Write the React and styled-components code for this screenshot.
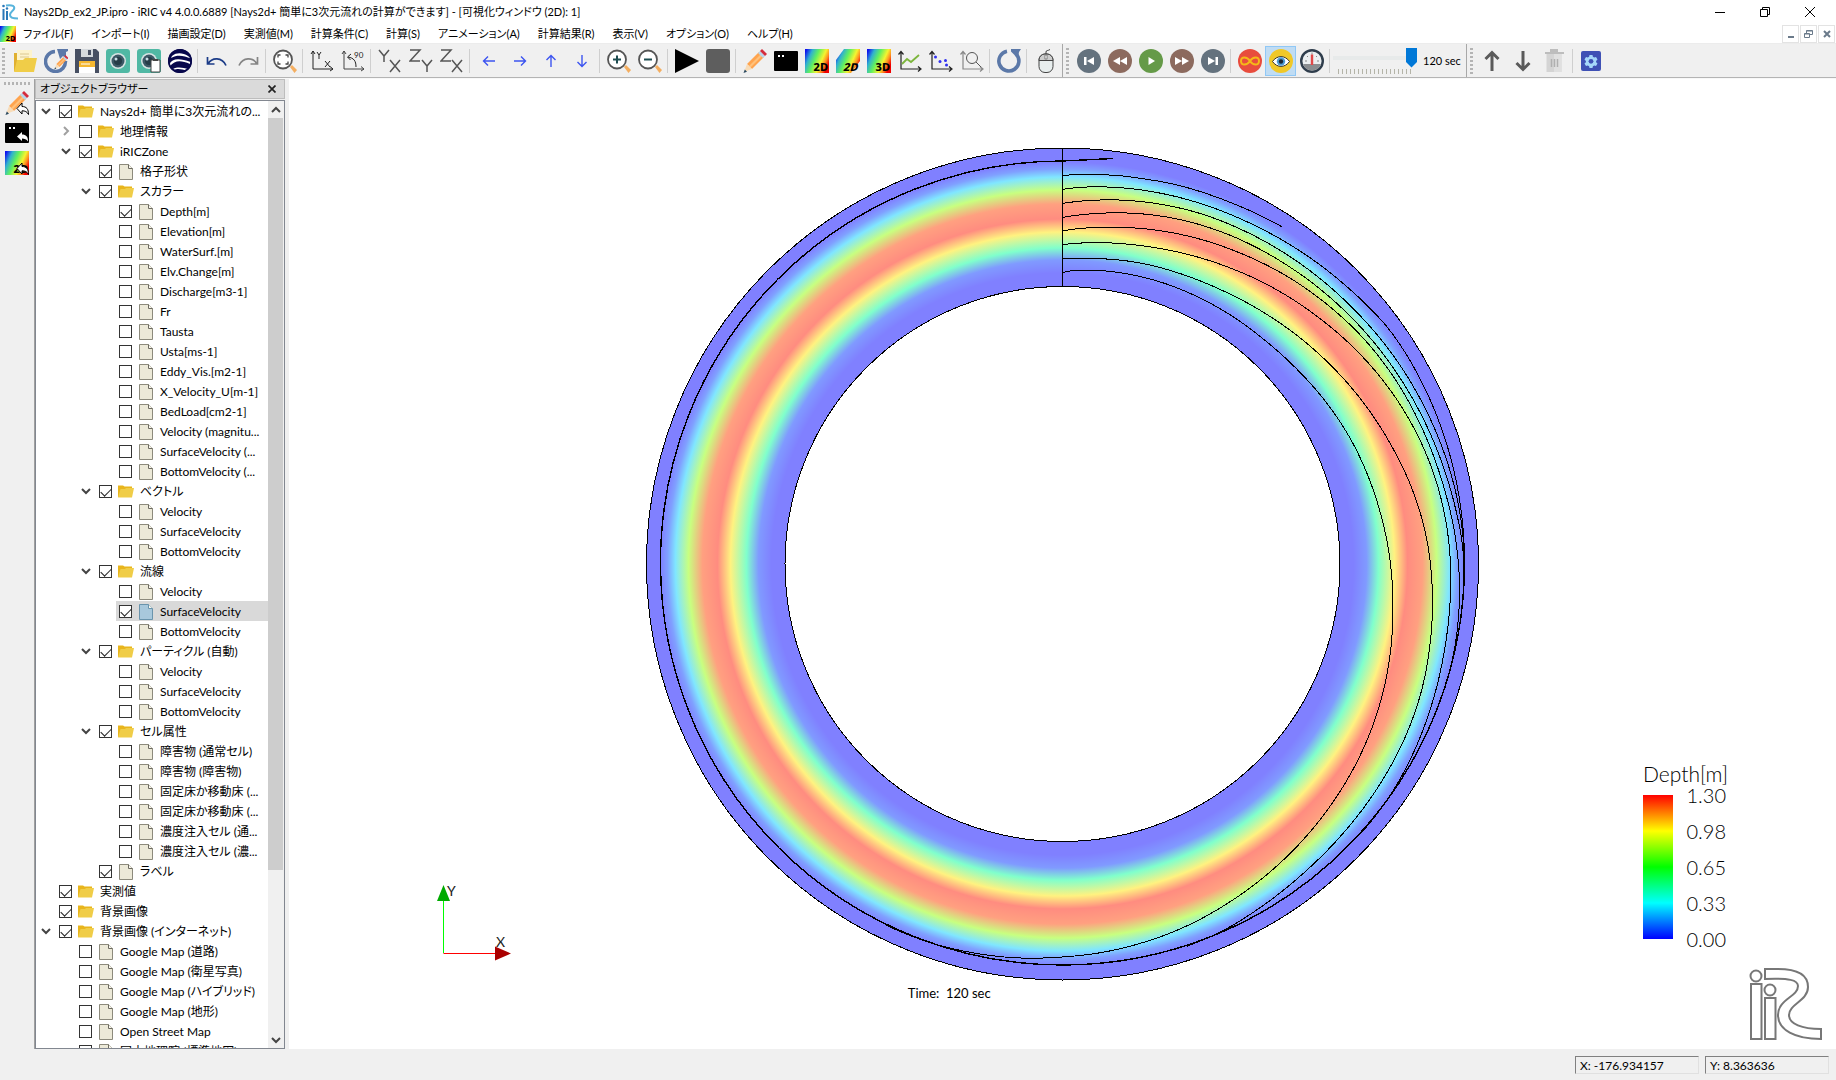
import React from "react";
import styled, { createGlobalStyle, css } from "styled-components";

const GlobalStyle = createGlobalStyle`
  * { box-sizing: border-box; }
  html, body, #root { height: 100%; }
  body {
    margin: 0;
    background: #fff;
    color: #000;
    font-family: Lato, "Noto Sans CJK JP", "Noto Sans", sans-serif;
    font-size: 12px;
    font-feature-settings: "palt";
    line-height: 20px;
  }
  button, input { font: inherit; color: inherit; }
`;

/* ---------- shell ---------- */

const Shell = styled.div`
  display: flex;
  flex-direction: column;
  height: 100vh;
  overflow: hidden;
`;

const TitleBar = styled.header`
  display: flex;
  align-items: center;
  height: 24px;
  flex: none;
  padding: 0 10px 0 2px;
`;

const TitleText = styled.h1`
  flex: 1;
  margin: 0 0 0 6px;
  font-size: 11px;
  font-weight: 400;
  white-space: nowrap;
`;

const WindowControls = styled.div`
  display: flex;
  gap: 13px;
`;

const WindowButton = styled.button`
  display: grid;
  place-items: center;
  width: 32px;
  height: 20px;
  padding: 0;
  border: 0;
  background: transparent;
`;

const MenuBar = styled.nav`
  display: flex;
  align-items: center;
  height: 20px;
  flex: none;
  border-bottom: 1px solid #ececec;
`;

const MenuList = styled.ul`
  display: flex;
  flex: 1;
  gap: 18px;
  margin: 0 0 0 7px;
  padding: 0;
  list-style: none;
`;

const MenuButton = styled.button`
  padding: 0;
  border: 0;
  background: transparent;
  font-size: 11px;
  white-space: nowrap;
  line-height: 18px;
`;

const MdiControls = styled.div`
  display: flex;
  gap: 1px;
  padding-right: 1px;
`;

const MdiButton = styled.button`
  display: grid;
  place-items: center;
  width: 17px;
  height: 18px;
  padding: 0;
  border: 1px solid #e3e3e3;
  background: #fff;
`;

const ToolRow = styled.div`
  display: flex;
  height: 34px;
  flex: none;
  background: #f0f0f0;
  border-bottom: 1px solid #b4b4b4;
`;

const ToolBar = styled.div`
  display: flex;
  align-items: center;
  padding: 0 1px 0 ${(p) => (p.$first ? 1 : 2)}px;
  border-right: ${(p) => (p.$last ? "0" : "1px solid #a8a8a8")};
`;

const Grip = styled.span`
  flex: none;
  ${(p) =>
    p.$horizontal
      ? css`
          width: 26px;
          height: 3px;
          margin: 3px 4px;
          background: repeating-linear-gradient(90deg, #b4b4b4 0 2px, transparent 2px 4px);
        `
      : css`
          width: 3px;
          height: 26px;
          margin: 0 4px 0 1px;
          background: repeating-linear-gradient(180deg, #b4b4b4 0 2px, transparent 2px 4px);
        `}
`;

const ToolButton = styled.button`
  display: grid;
  place-items: center;
  width: 31px;
  height: 30px;
  flex: none;
  padding: 0;
  border: 1px solid ${(p) => (p.$on ? "#90c8f6" : "transparent")};
  background: ${(p) => (p.$on ? "#c0dcf3" : "transparent")};

  svg { display: block; }
`;

const Separator = styled.span`
  width: 6px;
  height: 24px;
  flex: none;
  background: linear-gradient(#cfcfcf, #cfcfcf) 2px 0 / 1px 100% no-repeat;
`;

const SliderBox = styled.div`
  display: flex;
  flex-direction: column;
  justify-content: center;
  gap: 1px;
  width: 84px;
`;

const Slider = styled.input`
  appearance: none;
  width: 100%;
  height: 20px;
  margin: 0;
  background: linear-gradient(#e7eaea, #e7eaea) 0 8px / 100% 4px no-repeat;

  &::-webkit-slider-thumb {
    appearance: none;
    width: 11px;
    height: 20px;
    background: #0078d7;
    clip-path: polygon(0 0, 100% 0, 100% 72%, 50% 100%, 0 72%);
  }
`;

const Ticks = styled.span`
  height: 5px;
  margin: 0 5px;
  background: repeating-linear-gradient(90deg, #b4b4a8 0 1px, transparent 1px 4px);
`;

const SliderLabel = styled.label`
  margin: 0 4px 0 6px;
  font-size: 11px;
  white-space: nowrap;
`;

const Workspace = styled.div`
  display: flex;
  flex: 1;
  min-height: 0;
  border-top: 1px solid #f8f8f8;
`;

const SideTools = styled.div`
  display: flex;
  flex-direction: column;
  align-items: center;
  width: 35px;
  flex: none;
  background: #f0f0f0;
  border-right: 1px solid #a0a0a0;
`;

const Dock = styled.aside`
  display: flex;
  flex-direction: column;
  gap: 1px;
  width: 254px;
  flex: none;
  padding-right: 4px;
  background: #f0f0f0;
`;

const DockTitle = styled.div`
  display: flex;
  align-items: center;
  justify-content: space-between;
  height: 20px;
  flex: none;
  padding: 0 6px 0 4px;
  background: #dadada;
  border: 1px solid #bdbdbd;
`;

const DockHeading = styled.h2`
  margin: 0;
  font-size: 11px;
  font-weight: 400;
`;

const DockClose = styled.button`
  display: grid;
  place-items: center;
  width: 12px;
  height: 12px;
  padding: 0;
  border: 0;
  background: transparent;
`;

const TreeFrame = styled.div`
  display: flex;
  flex: 1;
  min-height: 0;
  background: #fff;
  border: 1px solid #828790;
`;

const TreeList = styled.ul`
  flex: 1;
  min-width: 0;
  margin: 0;
  padding: 0;
  overflow: hidden;
  list-style: none;
`;

const TreeRow = styled.li`
  display: flex;
  height: 20px;
  padding-left: ${(p) => p.$depth * 20}px;
`;

const Expander = styled.button`
  display: grid;
  place-items: center;
  width: 20px;
  height: 20px;
  flex: none;
  padding: 0;
  border: 0;
  background: transparent;
`;

const ExpanderGap = styled.span`
  width: 20px;
  flex: none;
`;

const TreeLabel = styled.label`
  display: flex;
  align-items: center;
  flex: 1;
  min-width: 0;
  padding: 1px 0 0 3px;
  white-space: nowrap;
  background: ${(p) => (p.$selected ? "#d9d9d9" : "transparent")};

  svg { flex: none; margin: 0 6px; }
`;

const Check = styled.input`
  appearance: none;
  display: grid;
  place-items: center;
  width: 13px;
  height: 13px;
  flex: none;
  margin: 0;
  border: 1px solid #333;
  background: #fff;

  &:checked::after {
    content: "";
    width: 5px;
    height: 9px;
    margin-bottom: 3px;
    border: solid #222;
    border-width: 0 1px 1px 0;
    transform: rotate(45deg);
  }
`;

const ScrollBar = styled.div`
  display: flex;
  flex-direction: column;
  align-items: center;
  width: 16px;
  flex: none;
  background: #f0f0f0;
`;

const ScrollButton = styled.button`
  display: grid;
  place-items: center;
  width: 100%;
  height: 17px;
  flex: none;
  padding: 0;
  border: 0;
  background: transparent;
`;

const ScrollTrack = styled.div`
  flex: 1;
  width: 100%;
`;

const ScrollThumb = styled.div`
  height: 82.4%;
  margin-right: 1px;
  background: #cdcdcd;
`;

/* ---------- plot ---------- */

const Canvas = styled.main`
  position: relative;
  flex: 1;
  min-width: 0;
  background: #fff;
`;

const Plot = styled.svg`
  display: block;
  width: 100%;
  height: 100%;
`;

const Axes = styled.svg`
  position: absolute;
  left: 146px;
  bottom: 85px;
  overflow: visible;
`;

const TimeLabel = styled.p`
  position: absolute;
  left: 40%;
  bottom: 46px;
  margin: 0;
  font-size: 13px;
  white-space: pre;
`;

const Legend = styled.figure`
  position: absolute;
  right: 107px;
  bottom: 100px;
  width: 86px;
  margin: 0;
  font-size: 20px;
  font-weight: 300;
`;

const LegendTitle = styled.figcaption`
  margin-bottom: 1px;
  font-size: 21px;
  line-height: 20px;
  white-space: nowrap;
`;

const LegendBody = styled.div`
  display: flex;
  align-items: center;
  justify-content: space-between;
  padding-right: 3px;
`;

const ColorBar = styled.div`
  width: 30px;
  height: 144px;
  background: linear-gradient(#f00, #ff0 25%, #0f0 50%, #0ff 75%, #00f);
`;

const LegendValues = styled.ol`
  display: flex;
  flex-direction: column;
  gap: 16px;
  margin: 0;
  padding: 0;
  line-height: 20px;
  list-style: none;
  text-align: right;
`;

const Logo = styled.svg`
  position: absolute;
  right: 13px;
  bottom: 8px;
`;

const StatusBar = styled.footer`
  display: flex;
  align-items: center;
  justify-content: flex-end;
  gap: 6px;
  height: 31px;
  flex: none;
  padding-right: 7px;
  background: #f0f0f0;
`;

const StatusCell = styled.output`
  width: 124px;
  height: 18px;
  padding-left: 4px;
  border: 1px solid;
  border-color: #808080 #e0e0e0 #e0e0e0 #808080;
  line-height: 18px;
`;

/* ---------- icons ---------- */

function Icon({ children, size = 24 }) {
  return (
    <svg width={size} height={size} viewBox="0 0 24 24" fill="none" aria-hidden="true">
      {children}
    </svg>
  );
}

const HiddenDefs = styled.svg`
  position: absolute;
`;

const Rainbow = () => (
  <HiddenDefs width="0" height="0" aria-hidden="true">
    <defs>
      <linearGradient id="rainbow" x1="0" y1=".15" x2="1" y2=".6">
        <stop offset="0" stopColor="#1010f0" />
        <stop offset=".22" stopColor="#30b0d0" />
        <stop offset=".45" stopColor="#60f060" />
        <stop offset=".7" stopColor="#f4f430" />
        <stop offset=".85" stopColor="#ff9020" />
        <stop offset="1" stopColor="#f00000" />
      </linearGradient>
    </defs>
  </HiddenDefs>
);

const Pencil = () => (
  <>
    <path d="M4 15 16 3l5 5L9 20z" fill="#ffa44f" />
    <path d="m6 17 12-12 1.5 1.5-12 12z" fill="#ffc27c" />
    <path d="m15 4 2-2 5 5-2 2z" fill="#b8d4ea" />
    <path d="m17 2 2-2 5 5-2 2z" fill="#d42c3c" />
    <path d="M4 15 1 23l8-3z" fill="#f8dcb8" />
    <path d="m1.8 20.500-1.300 3.500 3.500-1.300z" fill="#2a4a60" />
  </>
);

const BackArrow = () => (
  <path d="M12 17.500 17 12v3.500c4.500 0 6.500 2.500 6.500 8-1.500-3-3.500-3.700-6.500-3.700V23z" fill="#fff" stroke="#000" />
);

const Terminal = () => (
  <>
    <rect y="2" width="24" height="20" rx="1" fill="#000" />
    <path d="M4 6h2v2H4zM8 6h2v2H8z" fill="#fff" />
  </>
);

const BadgeText = ({ children, x = 23 }) => (
  <text x={x} y="22" textAnchor="end" fontFamily="Noto Sans, sans-serif" fontWeight="800" fontSize="11" fill="#000">
    {children}
  </text>
);

const Disc = ({ color, children }) => (
  <>
    <circle cx="12" cy="12" r="12" fill={color} />
    {children}
  </>
);

const ChartAxes = ({ color = "#222" }) => (
  <path d="M3 3v17h19M.5 5.500 3 2.500l2.500 3M20 17.500l3 2.500-3 2.500" stroke={color} strokeWidth="1.200" />
);

const Lens = ({ children }) => (
  <>
    <path d="m17 18 2-2 5 5-2.500 3z" fill="#f4ae60" />
    <circle cx="10" cy="10.500" r="9" fill="#fff" stroke="#555" strokeWidth="1.800" />
    {children}
  </>
);

const Camera = () => (
  <>
    <rect width="24" height="24" rx="3" fill="#50b8a4" />
    <circle cx="12" cy="12" r="8" fill="#d8e4e4" />
    <circle cx="12" cy="12" r="6.500" fill="#3c5866" />
    <circle cx="12" cy="12" r="4" fill="#263c48" />
    <circle cx="10" cy="10" r="1.500" fill="#c8dce4" />
  </>
);

const glyphs = {
  open: (
    <>
      <path d="M1 4h7l2 2v16H1z" fill="#e0b030" />
      <path d="M4 1h15v14H4z" fill="#fdf3cc" />
      <path d="M7 5h9M7 8h9" stroke="#dcc890" />
      <path d="M4 11h6l2-2h12l-3 14H1z" fill="#f0cd48" />
    </>
  ),
  reopen: (
    <>
      <path d="M11 2.500A10 10 0 1 0 21.500 12" stroke="#5b78a8" strokeWidth="3.500" />
      <path d="M13 0h11v2l-2 1v7l-3-3-3 3z" fill="#5b78a8" />
      <g transform="translate(10 6) scale(.6)"><Pencil /></g>
    </>
  ),
  save: (
    <>
      <path d="M0 0h21l3 3v21H0z" fill="#474f62" />
      <path d="M6 0h12v8H6z" fill="#d5d9dd" /><path d="M13 1h3v5h-3z" fill="#474f62" />
      <path d="M4 12h16v12H4z" fill="#fff" /><path d="M4 12h16v6H4z" fill="#f5b730" />
      <path d="M6 15h9" stroke="#fff" />
    </>
  ),
  camera: <Camera />,
  cameraCopy: (
    <>
      <Camera />
      <path d="M14 11h9v12h-9z" fill="#fff" stroke="#444" /><path d="M16 10h5v2h-5z" fill="#444" />
    </>
  ),
  earth: (
    <>
      <circle cx="12" cy="12" r="12" fill="#08084c" />
      <path d="M4 7c5-4 11-3 16 0l3 2.500C16 7 10 5 3 9zM1.500 15C4 9 12 9 22.500 13l-.5 2C13 11 7 11 2 17zM5 20c5-3 11-1 15 0l-1.500 1.500C14 20 9 19 6 21z" fill="#fff" />
      <circle cx="12" cy="12" r="11.200" stroke="#08084c" strokeWidth="1.600" />
    </>
  ),
  undo: <path d="M2.500 8v7h7M3 15c4-7 14-7 18 1.500" stroke="#1c3c88" strokeWidth="1.700" />,
  redo: <path d="M21.500 8v7h-7M21 15C17 8 7 8 3 16.500" stroke="#858585" strokeWidth="1.700" />,
  fit: (
    <Lens>
      <path d="M5 8.500V6h2.500M12.500 6H15v2.500M15 12.500V15h-2.500M7.500 15H5v-2.500" stroke="#444" strokeWidth="1.300" />
    </Lens>
  ),
  axisXY: (
    <>
      <path d="M3 2v18h20M1 5l2-3 2 3M20 17.500l3 2.500-3 2" stroke="#222" />
      <path d="m7 3 2 3 2-3M9 6v4M15 12l5 6M20 12l-5 6" stroke="#222" />
    </>
  ),
  rotate90: (
    <>
      <path d="M3 2v18h20M1 5l2-3 2 3M20 17.500l3 2.500-3 2" stroke="#444" />
      <path d="M15 18c0-6-2-9-8-10M10 5 6.500 8l3 3" stroke="#222" />
      <text x="13" y="9" fontSize="8" fill="#222">90</text>
    </>
  ),
  yx: <path d="m1 1 5 6 5-6M6 7v6M12 11l10 12M22 11 12 23" stroke="#555" strokeWidth="1.500" />,
  zy: <path d="M1 1h10L1 12h10M13 11l5 6 5-6M18 17v6" stroke="#555" strokeWidth="1.500" />,
  zx: <path d="M1 1h10L1 12h10M12 11l10 12M22 11 12 23" stroke="#555" strokeWidth="1.500" />,
  left: <path d="M18 12H6.500M11 7.500 6.500 12l4.500 4.500" stroke="#3c54f0" strokeWidth="1.400" />,
  right: <path d="M6 12h11.500M13 7.500l4.500 4.500-4.500 4.500" stroke="#3c54f0" strokeWidth="1.400" />,
  up: <path d="M12 18V6.500M7.500 11 12 6.500l4.500 4.500" stroke="#3c54f0" strokeWidth="1.400" />,
  down: <path d="M12 6v11.500M7.500 13l4.500 4.500 4.500-4.500" stroke="#3c54f0" strokeWidth="1.400" />,
  zoomIn: <Lens><path d="M6 10.500h8M10 6.500v8" stroke="#1d4c50" strokeWidth="2" /></Lens>,
  zoomOut: <Lens><path d="M6 10.500h8" stroke="#1d4c50" strokeWidth="2" /></Lens>,
  run: <path d="M0 0v24l24-12z" fill="#000" />,
  stop: <rect width="24" height="24" rx="3" fill="#5e5e5e" />,
  pencil: <Pencil />,
  terminal: <Terminal />,
  win2d: <><rect width="24" height="24" fill="url(#rainbow)" /><BadgeText>2D</BadgeText></>,
  bird2d: (
    <>
      <path d="M8 0h16v12L15 24H0V11z" fill="url(#rainbow)" />
      <g transform="skewX(-14)"><BadgeText x={27}>2D</BadgeText></g>
    </>
  ),
  win3d: <><rect width="24" height="24" fill="url(#rainbow)" /><BadgeText>3D</BadgeText></>,
  chart: <><ChartAxes /><path d="m4 15 5-5 4 3 8-7" stroke="#7cb53c" strokeWidth="1.800" /></>,
  scatter: (
    <>
      <ChartAxes />
      <g fill="#3030f0"><circle cx="6.500" cy="8" r="1.500" /><circle cx="11" cy="12.500" r="1.500" /><circle cx="16.500" cy="11.500" r="1.500" /><circle cx="17.500" cy="16" r="1.500" /></g>
    </>
  ),
  verify: <><ChartAxes color="#888" /><circle cx="12" cy="9" r="5.500" stroke="#555" /><path d="m16 13 5 5" stroke="#555" /></>,
  reload: (
    <>
      <path d="M10 2.200A10 10 0 1 0 19 5" stroke="#5b78a8" strokeWidth="3.600" />
      <path d="M14 0h10l-2 3-1 6.500-7-7z" fill="#5b78a8" />
    </>
  ),
  mouse: (
    <>
      <rect x="5" y="5" width="14" height="18.500" rx="6" fill="#e8eeee" stroke="#444" />
      <path d="M5 11.500h14V11a6 6 0 0 0-6-6h-2a6 6 0 0 0-6 6z" fill="#ccc" stroke="#444" />
      <path d="M12 5V3c0-2 2-1 4-2.500" stroke="#444" /><rect x="11" y="6" width="2" height="4" fill="#fff" stroke="#444" strokeWidth=".6" />
    </>
  ),
  first: <Disc color="#64727e"><path d="M7 8h2.500v8H7zM17 8v8l-7-4z" fill="#fff" /></Disc>,
  rewind: <Disc color="#8c6a5e"><path d="M12 8v8l-7-4zM19 8v8l-7-4z" fill="#fff" /></Disc>,
  play: <Disc color="#659a48"><path d="M9.500 8v8l6.500-4z" fill="#fff" /></Disc>,
  forward: <Disc color="#8c6a5e"><path d="M5 8v8l7-4zM12 8v8l7-4z" fill="#fff" /></Disc>,
  last: <Disc color="#64727e"><path d="M14.500 8H17v8h-2.500zM7 8v8l7-4z" fill="#fff" /></Disc>,
  infinite: (
    <Disc color="#e84c3d">
      <path d="M12 12C9 7.500 3 7 3 12s6 4.500 9 0 9-5 9 0-6 4.500-9 0z" stroke="#f5b818" strokeWidth="2" />
    </Disc>
  ),
  eye: (
    <Disc color="#f0c828">
      <path d="M3.500 12.500C8 6 16 6 20.500 12.500 16 19 8 19 3.500 12.500z" fill="#fff" stroke="#333" />
      <circle cx="12" cy="12.500" r="4.200" fill="#4c9cd4" /><circle cx="12" cy="12.500" r="2.200" fill="#1c2834" />
    </Disc>
  ),
  gauge: (
    <>
      <circle cx="12" cy="12" r="10.800" fill="#ebeef0" stroke="#2f3d4c" strokeWidth="2.400" />
      <path d="M3 15h18a9.500 9.500 0 0 1-18 0z" fill="#8a8d90" />
      <path d="M12 3.500v2M5 12h2M17 12h2M7 7l1 1M17 7l-1 1" stroke="#888" />
      <path d="M12 5.500V16" stroke="#e04848" strokeWidth="2.400" />
    </>
  ),
  moveUp: <path d="M12 22V4M5.500 10 12 3.500l6.500 6.500" stroke="#5a5a5a" strokeWidth="3" />,
  moveDown: <path d="M12 2v18M5.500 14l6.500 6.500 6.500-6.500" stroke="#5a5a5a" strokeWidth="3" />,
  trash: (
    <>
      <path d="M8 0h8v3H8zM3 3h19v2H3z" fill="#bdbdbd" /><path d="M4.500 5h15v18h-15z" fill="#d4d4d4" />
      <path d="M12 5h7.500v18H12z" fill="#e0e0e0" /><path d="M9.500 10v8M12.500 10v8M15.500 10v8" stroke="#b0b0b0" strokeWidth="1.500" />
    </>
  ),
  settings: (
    <>
      <rect x="2" y="2" width="20" height="20" rx="2" fill="#3f51b5" />
      <path d="M10.500 6h3l.4 1.800 1.300.8 1.800-.6 1.500 2.600-1.400 1.300v1.300l1.400 1.300-1.500 2.500-1.800-.5-1.300.8-.4 1.700h-3l-.4-1.700-1.300-.8-1.800.5-1.500-2.500 1.400-1.300v-1.300L5.500 10.600 7 8l1.800.6 1.300-.8z" fill="#a6d8fa" />
      <circle cx="12" cy="12.300" r="2.400" fill="#3f51b5" />
    </>
  ),
  sidePencil: <><Pencil /><BackArrow /></>,
  sideTerminal: (
    <>
      <Terminal />
      <path d="M12 15.500 17 11v2.500c4 0 6 2 6 7-1.500-2.300-3.500-3-6-3V20z" fill="#fff" />
    </>
  ),
  side2d: <><rect width="24" height="24" fill="url(#rainbow)" /><BadgeText>2D</BadgeText><BackArrow /></>,
};

const AppMark = () => (
  <svg width="16" height="16" viewBox="0 0 16 16" fill="none" aria-hidden="true">
    <path d="M1.500 5v11M5 7v9" stroke="#2a78b8" strokeWidth="2" />
    <circle cx="1.500" cy="2" r="1.300" fill="#2a78b8" /><circle cx="5" cy="4.500" r="1.200" fill="#2a78b8" />
    <path d="M4 1.500c7-1 9 1 8 3.500-1 2-4 3-4 6 0 2.500 3 3.500 8 3.500" stroke="#58b4dc" strokeWidth="2" />
  </svg>
);

const FolderIcon = () => (
  <svg width="16" height="14" viewBox="0 0 16 14" aria-hidden="true">
    <path d="M0 .5h5l1.500 1H14V12H0z" fill="#e8b51c" />
    <path d="M2.500 4H7l1-1h8l-2 9.500H0z" fill="#f0cd48" />
  </svg>
);

const FileIcon = ({ selected }) => (
  <svg width="16" height="16" viewBox="0 0 16 16" aria-hidden="true">
    <path d="M1.500.5h9l4 4v11h-13z" fill={selected ? "#a8c8dc" : "#ece9d8"} stroke={selected ? "#6a94ac" : "#8c8a7c"} />
    <path d="M10.500.500v4h4" fill="#f8f6ec" stroke={selected ? "#6a94ac" : "#6c6a60"} />
  </svg>
);

const Chevron = ({ dir, color = "#444", width = 2 }) => {
  const d = { down: "M1 3l4 4 4-4", right: "M3 1l4 4-4 4", up: "M1 7l4-4 4 4" }[dir];
  return (
    <svg width="10" height="10" viewBox="0 0 10 10" fill="none" aria-hidden="true">
      <path d={d} stroke={color} strokeWidth={width} />
    </svg>
  );
};

/* ---------- data ---------- */

const MENUS = [
  "ファイル(F)", "インポート(I)", "描画設定(D)", "実測値(M)", "計算条件(C)", "計算(S)",
  "アニメーション(A)", "計算結果(R)", "表示(V)", "オプション(O)", "ヘルプ(H)",
];

const MAIN_TOOLS = [
  ["open", "reopen", "save", "camera", "cameraCopy", "earth"],
  ["undo", "redo"],
  ["fit"],
  ["axisXY", "rotate90"],
  ["yx", "zy", "zx"],
  ["left", "right", "up", "down"],
  ["zoomIn", "zoomOut"],
  ["run", "stop"],
  ["pencil", "terminal", "win2d", "bird2d", "win3d", "chart", "scatter", "verify"],
  ["reload"],
  ["mouse"],
];

const PLAY_TOOLS = [["first", "rewind", "play", "forward", "last"], ["infinite", "eye", "gauge"]];
const ORDER_TOOLS = [["moveUp", "moveDown", "trash"], ["settings"]];
const SIDE_TOOLS = ["sidePencil", "sideTerminal", "side2d"];

const folder = (depth, text, checked = true, open = "down") => ({ depth, text, checked, open, folder: true });
const file = (depth, text, checked = false, selected = false) => ({ depth, text, checked, selected });

const TREE = [
  folder(0, "Nays2d+ 簡単に3次元流れの..."),
  folder(1, "地理情報", false, "right"),
  folder(1, "iRICZone"),
  file(2, "格子形状", true),
  folder(2, "スカラー"),
  file(3, "Depth[m]", true),
  ...[
    "Elevation[m]", "WaterSurf.[m]", "Elv.Change[m]", "Discharge[m3-1]", "Fr", "Tausta", "Usta[ms-1]",
    "Eddy_Vis.[m2-1]", "X_Velocity_U[m-1]", "BedLoad[cm2-1]", "Velocity (magnitu...",
    "SurfaceVelocity (...", "BottomVelocity (...",
  ].map((t) => file(3, t)),
  folder(2, "ベクトル"),
  file(3, "Velocity"),
  file(3, "SurfaceVelocity"),
  file(3, "BottomVelocity"),
  folder(2, "流線"),
  file(3, "Velocity"),
  file(3, "SurfaceVelocity", true, true),
  file(3, "BottomVelocity"),
  folder(2, "パーティクル (自動)"),
  file(3, "Velocity"),
  file(3, "SurfaceVelocity"),
  file(3, "BottomVelocity"),
  folder(2, "セル属性"),
  file(3, "障害物 (通常セル)"),
  file(3, "障害物 (障害物)"),
  file(3, "固定床か移動床 (..."),
  file(3, "固定床か移動床 (..."),
  file(3, "濃度注入セル (通..."),
  file(3, "濃度注入セル (濃..."),
  file(2, "ラベル", true),
  folder(0, "実測値", true, null),
  folder(0, "背景画像", true, null),
  folder(0, "背景画像 (インターネット)"),
  file(1, "Google Map (道路)"),
  file(1, "Google Map (衛星写真)"),
  file(1, "Google Map (ハイブリッド)"),
  file(1, "Google Map (地形)"),
  file(1, "Open Street Map"),
  file(1, "国土地理院 (標準地図)"),
];

const R_OUT = 416;
const R_IN = 277.5;
const DEPTH_STOPS = [
  [277, "#8080ff"], [291, "#8080ff"], [304, "#809aff"], [316, "#80ffcc"], [332, "#fff280"],
  [345, "#ff8c80"], [360, "#ffa080"], [374, "#c8ff80"], [387, "#80e6ff"], [395, "#80a0ff"],
  [402, "#8080ff"], [416, "#8080ff"],
];

/* Streamlines as (bearing in degrees, radius in thirds of a plot unit) pairs. */
const STREAMS = [
  [0,1166, 4,1171, 8,1177, 12,1181, 16,1187, 20,1191, 24,1195, 28,1200, 33,1207],
  [0,1124, 3,1132, 8,1141, 12,1147, 20,1157, 28,1166, 36,1177, 44,1189, 50,1199, 54,1206, 60,1208, 90,1206],
  [0,1082, 4,1093, 11,1110, 21,1129, 30,1140, 39,1150, 48,1160, 57,1172, 66,1183, 75,1194, 84,1203, 92,1206],
  [0,1040, 4,1052, 12,1075, 19,1092, 27,1107, 36,1120, 45,1133, 54,1146, 63,1159, 72,1173, 80,1187, 88,1202, 94,1206],
  [0,999, 3,1008, 8,1020, 14,1036, 22,1056, 30,1075, 38,1095, 46,1113, 54,1130, 62,1143, 70,1154, 78,1166, 86,1181, 94,1194, 102,1203, 108,1206],
  [0,958, 3,964, 8,973, 14,984, 22,1002, 30,1022, 38,1044, 46,1066, 54,1090, 62,1113, 70,1133, 78,1149, 86,1160, 94,1167, 102,1174, 110,1184, 118,1195, 126,1204, 132,1206],
  [0,916, 7,923, 14,932, 22,940, 30,950, 38,965, 46,983, 54,1003, 62,1025, 70,1048, 78,1073, 86,1095, 94,1112, 102,1128, 110,1143, 118,1153, 126,1160, 134,1167, 142,1176, 150,1189, 156,1200, 162,1206],
  [0,874, 2,881, 5,885, 10,890, 18,895, 26,898, 34,901, 42,905, 50,914, 58,927, 66,941, 74,954, 82,968, 90,984, 98,1001, 106,1021, 114,1041, 122,1060, 130,1078, 138,1096, 146,1114, 154,1132, 162,1150, 168,1161, 174,1171, 180,1179, 187,1190, 193,1197, 199,1203, 206,1206],
];

function streamPath(flat) {
  const knots = [];
  for (let i = 0; i < flat.length; i += 2) knots.push([flat[i], flat[i + 1] / 3]);
  const slope = (i) => {
    const a = knots[Math.max(i - 1, 0)];
    const b = knots[Math.min(i + 1, knots.length - 1)];
    return (b[1] - a[1]) / (b[0] - a[0]);
  };
  const points = [];
  for (let i = 0; i < knots.length - 1; i += 1) {
    const [a0, r0] = knots[i];
    const [a1, r1] = knots[i + 1];
    const span = a1 - a0;
    for (let s = 0; s <= span; s += 1) {
      const t = s / span;
      const t2 = t * t;
      const t3 = t2 * t;
      const r =
        (2 * t3 - 3 * t2 + 1) * r0 + (t3 - 2 * t2 + t) * span * slope(i) +
        (3 * t2 - 2 * t3) * r1 + (t3 - t2) * span * slope(i + 1);
      const angle = ((a0 + s) * Math.PI) / 180;
      points.push(`${(r * Math.sin(angle)).toFixed(2)},${(-r * Math.cos(angle)).toFixed(2)}`);
    }
  }
  return `M${points.join("L")}`;
}

/* ---------- parts ---------- */

function ToolGroups({ groups, active }) {
  return groups.map((group, i) => (
    <React.Fragment key={group[0]}>
      {i > 0 && <Separator />}
      {group.map((name) => (
        <ToolButton key={name} type="button" aria-label={name} $on={name === active}>
          <Icon>{glyphs[name]}</Icon>
        </ToolButton>
      ))}
    </React.Fragment>
  ));
}

function ObjectTree() {
  return (
    <TreeList>
      {TREE.map((node, i) => (
        <TreeRow key={i} $depth={node.depth}>
          {node.open ? (
            <Expander type="button" aria-label="toggle">
              <Chevron dir={node.open} color={node.open === "right" ? "#a0a0a0" : "#444"} />
            </Expander>
          ) : (
            <ExpanderGap />
          )}
          <TreeLabel $selected={node.selected}>
            <Check type="checkbox" defaultChecked={node.checked} />
            {node.folder ? <FolderIcon /> : <FileIcon selected={node.selected} />}
            {node.text}
          </TreeLabel>
        </TreeRow>
      ))}
    </TreeList>
  );
}

function DepthPlot() {
  return (
    <Plot viewBox="-773.500 -485 1547 970" aria-label="Depth">
      <defs>
        <radialGradient id="depth" gradientUnits="userSpaceOnUse" cx="0" cy="0" r={R_OUT}>
          {DEPTH_STOPS.map(([r, color]) => (
            <stop key={r} offset={r / R_OUT} stopColor={color} />
          ))}
        </radialGradient>
      </defs>
      <circle r={R_OUT} fill="url(#depth)" />
      <circle r={R_IN} fill="#fff" />
      <g fill="none" stroke="#000" shapeRendering="crispEdges">
        <circle r={R_OUT} />
        <circle r={R_IN} />
        <path d={`M0-${R_OUT}V-${R_IN}`} />
        {STREAMS.map((s) => (
          <path key={s[1]} d={streamPath(s)} />
        ))}
        <path d="M402-4A402 402 0 1 1 0-403L51-405.500" strokeWidth="1.400" />
      </g>
    </Plot>
  );
}

export default function App() {
  return (
    <Shell>
      <GlobalStyle />
      <Rainbow />
      <TitleBar>
        <AppMark />
        <TitleText>Nays2Dp_ex2_JP.ipro - iRIC v4 4.0.0.6889 [Nays2d+ 簡単に3次元流れの計算ができます] - [可視化ウィンドウ (2D): 1]</TitleText>
        <WindowControls>
          <WindowButton type="button" aria-label="minimize">
            <svg width="10" height="10"><path d="M0 5.500h10" stroke="#000" /></svg>
          </WindowButton>
          <WindowButton type="button" aria-label="restore">
            <svg width="10" height="10" fill="none" stroke="#000"><path d="M.500 2.500h7v7h-7zM2.500 2.500v-2h7v7h-2" /></svg>
          </WindowButton>
          <WindowButton type="button" aria-label="close">
            <svg width="10" height="10" stroke="#000"><path d="m0 0 10 10M10 0 0 10" /></svg>
          </WindowButton>
        </WindowControls>
      </TitleBar>

      <MenuBar>
        <Icon size={16}>{glyphs.win2d}</Icon>
        <MenuList>
          {MENUS.map((m) => (
            <li key={m}><MenuButton type="button">{m}</MenuButton></li>
          ))}
        </MenuList>
        <MdiControls>
          <MdiButton type="button" aria-label="minimize view">
            <svg width="8" height="8"><path d="M1 7h6" stroke="#6a7a8a" strokeWidth="2" /></svg>
          </MdiButton>
          <MdiButton type="button" aria-label="restore view">
            <svg width="9" height="8" fill="none" stroke="#6a7a8a"><path d="M.500 3.500h5v4h-5zM.500 4h5M2.500 3V.500h6v4H6M2.500 1h6" /></svg>
          </MdiButton>
          <MdiButton type="button" aria-label="close view">
            <svg width="8" height="8" stroke="#6a7a8a" strokeWidth="2"><path d="m1 1 6 6M7 1 1 7" /></svg>
          </MdiButton>
        </MdiControls>
      </MenuBar>

      <ToolRow>
        <ToolBar $first>
          <Grip />
          <ToolGroups groups={MAIN_TOOLS} />
        </ToolBar>
        <ToolBar>
          <Grip />
          <ToolGroups groups={PLAY_TOOLS} active="eye" />
          <Separator />
          <SliderBox>
            <Slider id="time" type="range" min="0" max="120" defaultValue="120" />
            <Ticks />
          </SliderBox>
          <SliderLabel htmlFor="time">120 sec</SliderLabel>
        </ToolBar>
        <ToolBar $last>
          <Grip />
          <ToolGroups groups={ORDER_TOOLS} />
        </ToolBar>
      </ToolRow>

      <Workspace>
        <SideTools>
          <Grip $horizontal />
          {SIDE_TOOLS.map((name) => (
            <ToolButton key={name} type="button" aria-label={name}>
              <Icon>{glyphs[name]}</Icon>
            </ToolButton>
          ))}
        </SideTools>

        <Dock>
          <DockTitle>
            <DockHeading>オブジェクトブラウザー</DockHeading>
            <DockClose type="button" aria-label="close panel">
              <svg width="8" height="8" stroke="#222" strokeWidth="1.700"><path d="m.500.500 7 7M7.500.500l-7 7" /></svg>
            </DockClose>
          </DockTitle>
          <TreeFrame>
            <ObjectTree />
            <ScrollBar>
              <ScrollButton type="button" aria-label="scroll up"><Chevron dir="up" /></ScrollButton>
              <ScrollTrack><ScrollThumb /></ScrollTrack>
              <ScrollButton type="button" aria-label="scroll down"><Chevron dir="down" /></ScrollButton>
            </ScrollBar>
          </TreeFrame>
        </Dock>

        <Canvas>
          <DepthPlot />
          <Axes width="80" height="80" viewBox="0 0 80 80">
            <path d="M8.500 16v53" stroke="#0f0" />
            <path d="M8.500 69.500H60" stroke="#f00" />
            <path d="M8.500 1 15 17H2z" fill="#00aa00" />
            <path d="M60 62.500v14l16-7z" fill="#aa0000" />
            <g fontSize="14" fill="#222">
              <text x="12" y="12">Y</text>
              <text x="61" y="63">X</text>
            </g>
          </Axes>
          <TimeLabel>Time:  120 sec</TimeLabel>
          <Legend>
            <LegendTitle>Depth[m]</LegendTitle>
            <LegendBody>
              <ColorBar />
              <LegendValues>
                {["1.30", "0.98", "0.65", "0.33", "0.00"].map((v) => (
                  <li key={v}>{v}</li>
                ))}
              </LegendValues>
            </LegendBody>
          </Legend>
          <Logo width="74" height="74" viewBox="0 0 74 74" fill="#fff" stroke="#777" strokeWidth="2" aria-label="iRIC">
            <circle cx="7" cy="9" r="5.500" />
            <circle cx="21" cy="23" r="5.500" />
            <path d="M2 17h10.500v55H2zM16 31h10.500v41H16z" />
            <path d="M16 2h13C50 2 59 9 59 20c0 14-19 17-19 28 0 9 13 14 32 14v10C46 72 29 63 29 48c0-16 20-18 20-29 0-6-9-8-33-7z" />
          </Logo>
        </Canvas>
      </Workspace>

      <StatusBar>
        <StatusCell>X: -176.934157</StatusCell>
        <StatusCell>Y: 8.363636</StatusCell>
      </StatusBar>
    </Shell>
  );
}
